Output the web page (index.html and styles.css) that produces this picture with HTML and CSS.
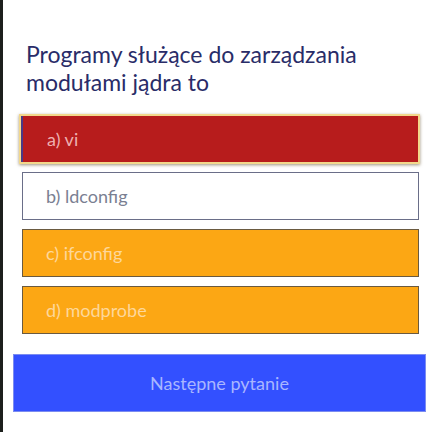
FILE: index.html
```html
<!DOCTYPE html>
<html lang="pl">
<head>
<meta charset="utf-8">
<link rel="stylesheet" href="styles.css">
</head>
<body>
<div class="page">
  <h1 class="question">Programy służące do zarządzania modułami jądra to</h1>
  <div class="answers">
    <div class="answer answer-wrong">a) vi</div>
    <div class="answer answer-plain">b) ldconfig</div>
    <div class="answer answer-orange">c) ifconfig</div>
    <div class="answer answer-orange">d) modprobe</div>
  </div>
  <button class="next">Następne pytanie</button>
</div>
</body>
</html>
```
FILE: styles.css
```css
html, body {
  margin: 0;
  padding: 0;
  background: #ffffff;
}
body {
  font-family: Lato, "Open Sans", sans-serif;
}
.page {
  box-sizing: border-box;
  width: 437px;
  height: 432px;
  border-left: 3px solid #1c1f1c;
  padding: 40px 11px 0 10px;
  display: flex;
  flex-direction: column;
}
.question {
  margin: 0 0 18px 13px;
  font-size: 23px;
  font-weight: 400;
  line-height: 28px;
  color: #292c68;
  width: 370px;
}
.answers {
  display: flex;
  flex-direction: column;
  gap: 9px;
  padding: 0 7px 0 9px;
}
.answer {
  box-sizing: border-box;
  height: 48px;
  display: flex;
  align-items: center;
  padding-left: 23px;
  font-size: 18px;
  font-weight: 400;
  border: 1px solid #5c5f70;
}
.answer-wrong {
  height: 50px;
  margin: 0 -1px -1px -3px;
  background: #b71c1c;
  color: #eeb0b0;
  border: 2px solid #f2d88c;
  padding-left: 26px;
  box-shadow: inset 2px 0 0 #4b3a86, 0 1px 3px rgba(80, 60, 20, 0.55);
}
.answer-plain {
  background: #ffffff;
  color: #7a7f92;
  border: 1.5px solid #6a6e88;
}
.answer-orange {
  background: #fca714;
  color: #fed79a;
  border: 1.5px solid #6a5a40;
}
.next {
  margin-top: 20px;
  height: 58px;
  border: 1px solid #7b8cf0;
  background: #3350ff;
  color: #a9b6ff;
  font-family: Lato, "Open Sans", sans-serif;
  font-size: 18px;
  font-weight: 400;
  padding: 0;
}
```
